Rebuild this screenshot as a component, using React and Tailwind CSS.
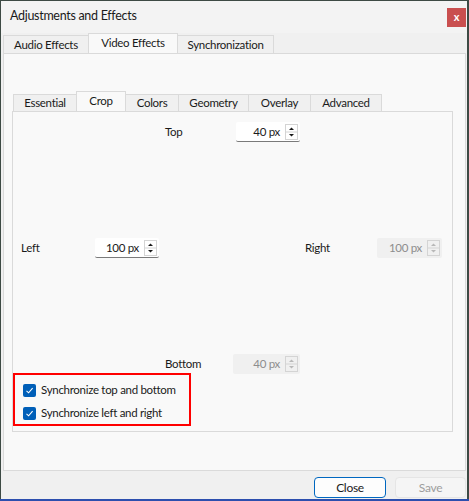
import React from 'react';

const font = { fontFamily: 'Lato, "Noto Sans", Arial, sans-serif' };

function Tab({ label, active, inner, width }) {
  const base = inner ? 'h-[17px] mt-[3px]' : 'h-[18px] mt-[2px]';
  return (
    <div
      className={`${width} flex items-center justify-center whitespace-nowrap border border-b-0 border-[#dadada] -ml-px first:ml-0 ${
        active ? 'h-[20px] mt-0 bg-[#f9f9f9] relative z-10 mb-[-1px] pb-px' : `${base} bg-[#f0f0f0]`
      }`}
    >
      {label}
    </div>
  );
}

function Arrows({ disabled }) {
  const c = disabled ? '#b8b8b8' : '#1a1a1a';
  return (
    <svg width="13" height="16" viewBox="0 0 13 16" className="shrink-0">
      <rect x="0.5" y="0.5" width="12" height="15" fill={disabled ? '#f0f0f0' : '#fff'} stroke="#d4d4d4" />
      <line x1="1" y1="8" x2="12" y2="8" stroke="#d4d4d4" />
      <path d="M6.5 3.5 L9 6 L4 6 Z" fill={c} />
      <path d="M4 10 L9 10 L6.5 12.5 Z" fill={c} />
    </svg>
  );
}

function SpinBox({ value, disabled, width = 'w-[64px]' }) {
  return (
    <div
      className={`flex items-center h-[20px] ${width} rounded-[2px] ${
        disabled ? 'bg-[#f0f0f0] text-[#8d8d8d]' : 'bg-white border-b border-[#7a7a7a] text-[#1a1a1a]'
      }`}
    >
      <span className="flex-1 text-right pr-[5px] whitespace-nowrap">{value}</span>
      <div className="mr-[2px] flex">
        <Arrows disabled={disabled} />
      </div>
    </div>
  );
}

function Check({ label }) {
  return (
    <div className="flex items-center gap-[5px] h-[22px] whitespace-nowrap">
      <div className="w-[13px] h-[13px] shrink-0 rounded-[2px] bg-[#005fb8] flex items-center justify-center">
        <svg width="9" height="9" viewBox="0 0 9 9">
          <path d="M1.5 4.8 L3.6 6.8 L7.6 2.2" fill="none" stroke="#fff" strokeWidth="1.1" />
        </svg>
      </div>
      <span>{label}</span>
    </div>
  );
}

export default function App() {
  return (
    <div className="w-[469px] h-[501px] bg-[#3d4a44] pt-px border-b-2 border-[#2d4fae]" style={font}>
      <div className="ml-px w-[466px] h-[498px] bg-[#f0f0f0] flex flex-col text-[11.5px] tracking-[-0.3px] text-[#1a1a1a]">
        {/* title bar */}
        <div className="h-[32px] bg-[#f3f3f3] flex items-start justify-between">
          <span className="pl-[9px] pt-[6px] text-[12.5px]">Adjustments and Effects</span>
          <div className="mt-[7px] mr-px w-[19px] h-[19px] bg-[#c94f4f] flex items-center justify-center text-white text-[11px] font-bold leading-none pb-[2px] tracking-normal">
            x
          </div>
        </div>

        {/* outer tabs */}
        <div className="flex pl-[2px] h-[20px]">
          <Tab label="Audio Effects" width="w-[86px]" />
          <Tab label="Video Effects" width="w-[90px]" active />
          <Tab label="Synchronization" width="w-[97px]" />
        </div>

        <div className="mx-[2px] mr-[1px] h-[418px] border border-[#dadada] bg-[#f9f9f9] pl-[8px] pr-[12px] pt-[37px] flex flex-col">
          {/* inner tabs */}
          <div className="flex pl-[1px] h-[20px]">
            <Tab label="Essential" width="w-[64px]" inner />
            <Tab label="Crop" width="w-[50px]" inner active />
            <Tab label="Colors" width="w-[54px]" inner />
            <Tab label="Geometry" width="w-[71px]" inner />
            <Tab label="Overlay" width="w-[63px]" inner />
            <Tab label="Advanced" width="w-[72px]" inner />
          </div>

          <div className="border border-[#dadada] h-[321px] flex flex-col pt-[10px]">
            <div className="grid grid-cols-[82px_70px_71px_69px_72px_65px] grid-rows-[20px_20px_20px] gap-y-[96px] items-center">
              <div />
              <div />
              <div>Top</div>
              <div><SpinBox value="40 px" /></div>
              <div />
              <div />

              <div className="pl-[8px]">Left</div>
              <div><SpinBox value="100 px" /></div>
              <div />
              <div />
              <div>Right</div>
              <div><SpinBox value="100 px" disabled width="w-[65px]" /></div>

              <div />
              <div />
              <div>Bottom</div>
              <div className="-ml-[3px]"><SpinBox value="40 px" disabled width="w-[67px]" /></div>
              <div />
              <div />
            </div>

            <div className="mt-[-1px] w-[178px] h-[53px] border-2 border-[#ff0000] pl-[8px] pt-[4px] flex flex-col gap-[1px]">
              <Check label="Synchronize top and bottom" />
              <Check label="Synchronize left and right" />
            </div>
          </div>
        </div>

        {/* footer */}
        <div className="flex-1 flex items-start justify-end gap-[9px] pt-[6px] pr-px">
          <button className="w-[72px] h-[21px] rounded-[4px] border border-[#0067c0] bg-[#fdfdfd] text-[12px] text-[#1a1a1a]">
            Close
          </button>
          <button className="w-[71px] h-[21px] rounded-[4px] border border-[#e5e5e5] bg-[#f5f5f5] text-[12px] text-[#9d9d9d]">
            Save
          </button>
        </div>
      </div>
    </div>
  );
}
